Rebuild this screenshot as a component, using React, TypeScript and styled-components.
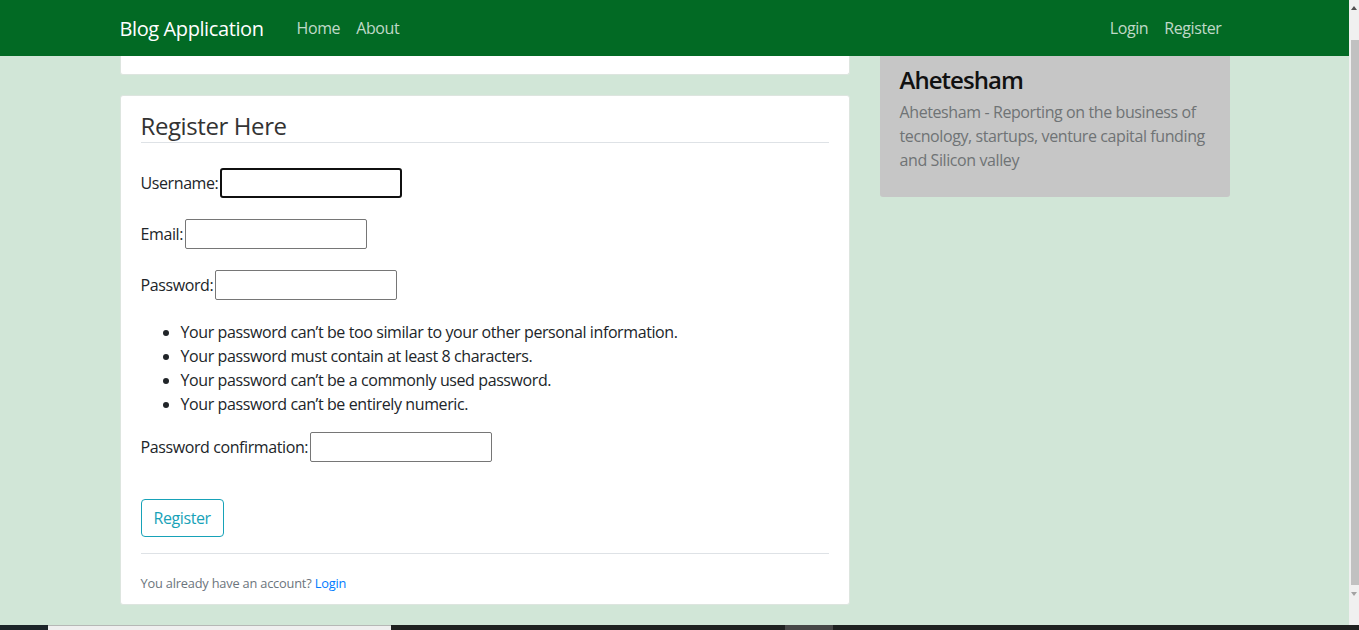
import React from "react";
import styled, { createGlobalStyle } from "styled-components";

const GlobalStyle = createGlobalStyle`
  html, body { margin: 0; padding: 0; overflow: hidden; }
  body {
    font-family: "Open Sans", "Noto Sans", sans-serif;
    color: #212529;
    letter-spacing: -0.025em;
  }
  * { box-sizing: border-box; }
`;

const Frame = styled.div`
  width: 1359px;
  height: 630px;
  display: flex;
  flex-direction: column;
  overflow: hidden;
`;

const Screen = styled.div`
  flex: 1;
  display: flex;
  min-height: 0;
`;

const Viewport = styled.div`
  width: 1349px;
  background: #d1e6d7;
  display: flex;
  flex-direction: column;
`;

const Navbar = styled.nav`
  height: 56px;
  background: #026a24;
  flex-shrink: 0;
`;

const Container = styled.div`
  width: 1140px;
  margin: 0 auto;
  padding: 0 15px;
  display: flex;
`;

const NavInner = styled(Container)`
  height: 56px;
  align-items: center;
`;

const Brand = styled.a`
  color: #fff;
  font-size: 20px;
  letter-spacing: -0.02em;
  margin-right: 25px;
  text-decoration: none;
`;

const NavGroup = styled.div<{ $right?: boolean }>`
  display: flex;
  margin-left: ${(p) => (p.$right ? "auto" : "0")};
`;

const NavLink = styled.a`
  color: rgba(255, 255, 255, 0.76);
  font-size: 16px;
  padding: 8px;
  text-decoration: none;
`;

const Row = styled(Container)`
  gap: 30px;
  align-items: flex-start;
`;

const MainCol = styled.div`
  width: 730px;
  display: flex;
  flex-direction: column;
`;

const SideCol = styled.div`
  width: 350px;
`;

const TopStub = styled.div`
  height: 19px;
  background: #fff;
  border: 1px solid #dde5df;
  border-top: none;
  border-radius: 0 0 3px 3px;
`;

const Card = styled.section`
  margin-top: 20px;
  background: #fff;
  border: 1px solid #dde5df;
  border-radius: 3px;
  padding: 10px 20px 11px;
`;

const Legend = styled.h2`
  margin: 0 0 24px;
  padding-top: 3px;
  font-size: 24px;
  font-weight: 400;
  line-height: 33px;
  color: #333;
  border-bottom: 1px solid #dee2e6;
`;

const Field = styled.div<{ $gap?: number }>`
  display: flex;
  align-items: center;
  height: 31px;
  margin-bottom: ${(p) => p.$gap ?? 20}px;
  font-size: 16px;
  line-height: 24px;
`;

const Label = styled.label`
  margin-right: 2px;
`;

const Input = styled.input<{ $focused?: boolean }>`
  width: 182px;
  height: 30px;
  border: 1px solid #767676;
  border-radius: 2px;
  font: inherit;
  padding: 1px 2px;
  background: #fff;
  outline: none;
  ${(p) =>
    p.$focused &&
    `
    border: 2px solid #101010;
    border-radius: 3px;
  `}
`;

const HelpList = styled.ul`
  margin: 0 0 15px;
  padding-left: 40px;
  font-size: 16px;
  line-height: 24px;
`;

const OutlineButton = styled.button`
  align-self: flex-start;
  font: inherit;
  font-size: 16px;
  line-height: 24px;
  letter-spacing: -0.025em;
  color: #17a2b8;
  background: transparent;
  border: 1px solid #17a2b8;
  border-radius: 4px;
  padding: 6px 12px;
  margin-bottom: 16px;
`;

const FooterNote = styled.div`
  border-top: 1px solid #dee2e6;
  padding-top: 20px;
  font-size: 12.8px;
  line-height: 19px;
  color: #6c757d;
  letter-spacing: -0.015em;
`;

const Link = styled.a`
  color: #007bff;
  text-decoration: none;
`;

const SideCard = styled.aside`
  background: #c6c6c6;
  border-radius: 0 0 3px 3px;
  padding: 7px 20px 9px;
  height: 141px;
`;

const SideTitle = styled.h3`
  margin: 0 0 3px;
  font-size: 24px;
  font-weight: 600;
  letter-spacing: -0.04em;
  line-height: 34px;
  color: #111;
`;

const SideText = styled.p`
  margin: 0;
  font-size: 16px;
  line-height: 24px;
  color: #6f7375;
`;

const Scrollbar = styled.div`
  width: 10px;
  background: #f0f0f0;
  display: flex;
  flex-direction: column;
  align-items: center;
`;

const Arrow = styled.div<{ $down?: boolean }>`
  height: 40px;
  display: flex;
  justify-content: center;
  align-items: flex-start;
  padding-top: ${(p) => (p.$down ? "7px" : "6px")};
  &::after {
    content: "";
    border-left: 3px solid transparent;
    border-right: 3px solid transparent;
    ${(p) =>
      p.$down ? "border-top: 4px solid #a3a3a3;" : "border-bottom: 4px solid #505050;"}
  }
`;

const Thumb = styled.div`
  width: 8px;
  margin-left: 1px;
  flex: 1;
  background: #c1c1c1;
`;

const Taskbar = styled.div`
  height: 5px;
  display: flex;
  background: #1f2120;
`;

const TaskSeg = styled.div<{ $w: number; $bg: string; $edge?: boolean }>`
  width: ${(p) => p.$w}px;
  background: ${(p) => p.$bg};
  border-top: ${(p) => (p.$edge ? "1px solid #b6b8b6" : "none")};
`;

export default function App() {
  return (
    <>
      <GlobalStyle />
      <Frame>
        <Screen>
          <Viewport>
            <Navbar>
              <NavInner>
                <Brand href="#">Blog Application</Brand>
                <NavGroup>
                  <NavLink href="#">Home</NavLink>
                  <NavLink href="#">About</NavLink>
                </NavGroup>
                <NavGroup $right>
                  <NavLink href="#">Login</NavLink>
                  <NavLink href="#">Register</NavLink>
                </NavGroup>
              </NavInner>
            </Navbar>
            <Row>
              <MainCol>
                <TopStub />
                <Card>
                  <Legend>Register Here</Legend>
                  <Field>
                    <Label>Username:</Label>
                    <Input $focused type="text" />
                  </Field>
                  <Field>
                    <Label>Email:</Label>
                    <Input type="email" />
                  </Field>
                  <Field>
                    <Label>Password:</Label>
                    <Input type="password" />
                  </Field>
                  <HelpList>
                    <li>Your password can’t be too similar to your other personal information.</li>
                    <li>Your password must contain at least 8 characters.</li>
                    <li>Your password can’t be a commonly used password.</li>
                    <li>Your password can’t be entirely numeric.</li>
                  </HelpList>
                  <Field $gap={37}>
                    <Label>Password confirmation:</Label>
                    <Input type="password" />
                  </Field>
                  <OutlineButton type="button">Register</OutlineButton>
                  <FooterNote>
                    You already have an account? <Link href="#">Login</Link>
                  </FooterNote>
                </Card>
              </MainCol>
              <SideCol>
                <SideCard>
                  <SideTitle>Ahetesham</SideTitle>
                  <SideText>
                    Ahetesham - Reporting on the business of tecnology, startups, venture capital
                    funding and Silicon valley
                  </SideText>
                </SideCard>
              </SideCol>
            </Row>
          </Viewport>
          <Scrollbar>
            <Arrow />
            <Thumb />
            <Arrow $down />
          </Scrollbar>
        </Screen>
        <Taskbar>
          <TaskSeg $w={48} $bg="#1c2529" />
          <TaskSeg $w={343} $bg="#efefef" $edge />
          <TaskSeg $w={394} $bg="#1f2120" />
          <TaskSeg $w={48} $bg="#474747" />
        </Taskbar>
      </Frame>
    </>
  );
}
